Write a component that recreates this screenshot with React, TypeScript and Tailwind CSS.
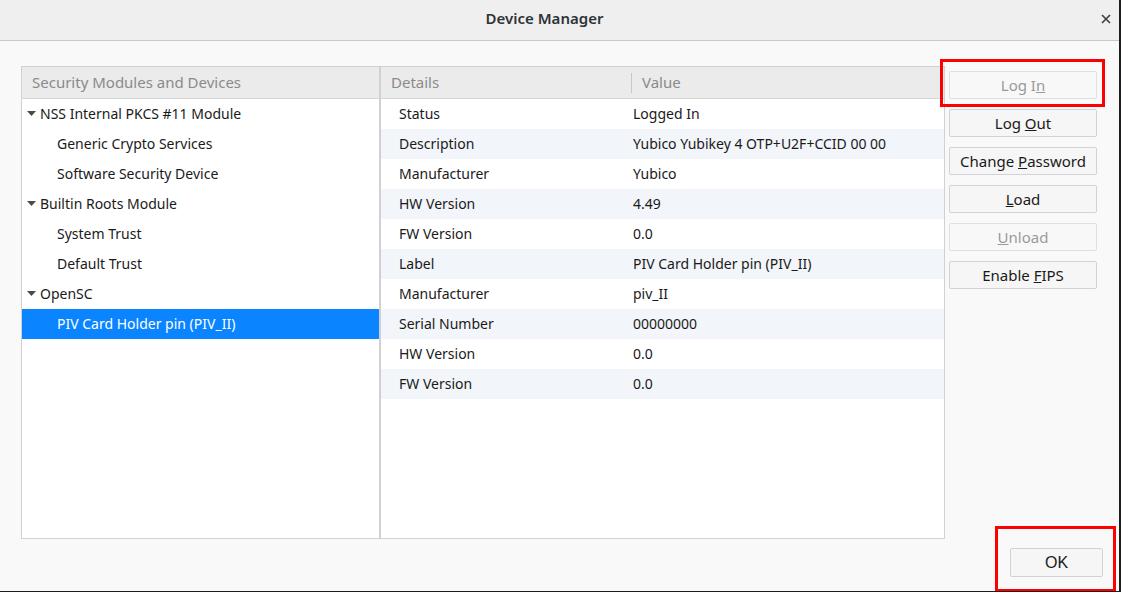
import React from "react";

const F = { fontFamily: '"Noto Sans", "Open Sans", sans-serif' };

function Caret() {
  return (
    <svg width="9" height="5" viewBox="0 0 9 5" className="mr-[4px] shrink-0">
      <path d="M0 0 L9 0 L4.5 5 Z" fill="#4a4a4a" />
    </svg>
  );
}

const tree: { label: string; level: number; selected?: boolean }[] = [
  { label: "NSS Internal PKCS #11 Module", level: 0 },
  { label: "Generic Crypto Services", level: 1 },
  { label: "Software Security Device", level: 1 },
  { label: "Builtin Roots Module", level: 0 },
  { label: "System Trust", level: 1 },
  { label: "Default Trust", level: 1 },
  { label: "OpenSC", level: 0 },
  { label: "PIV Card Holder pin (PIV_II)", level: 1, selected: true },
];

const details: [string, string][] = [
  ["Status", "Logged In"],
  ["Description", "Yubico Yubikey 4 OTP+U2F+CCID 00 00"],
  ["Manufacturer", "Yubico"],
  ["HW Version", "4.49"],
  ["FW Version", "0.0"],
  ["Label", "PIV Card Holder pin (PIV_II)"],
  ["Manufacturer", "piv_II"],
  ["Serial Number", "00000000"],
  ["HW Version", "0.0"],
  ["FW Version", "0.0"],
];

function Btn({ children, disabled }: { children: React.ReactNode; disabled?: boolean }) {
  return (
    <div
      className={
        "h-[28px] w-[148px] flex items-center justify-center rounded-[2px] border text-[15px] " +
        (disabled ? "text-[#9a9a9a] border-[#e0e0e4] bg-[#f8f8f8]" : "text-[#1a1a1a] border-[#d2d2d6] bg-[#f6f6f6]")
      }
    >
      <span>{children}</span>
    </div>
  );
}

export default function App() {
  return (
    <div
      className="relative w-[1121px] h-[592px] bg-[#f9f9f9] flex flex-col border-r-2 border-b border-[#1c1c1c] overflow-hidden"
      style={F}
    >
      <div className="relative h-[41px] shrink-0 bg-[#efefef] border-b border-[#c8c8c8] flex items-center justify-center pr-[30px] pb-[3px]">
        <span className="text-[15px] font-semibold text-[#2e3436]">Device Manager</span>
        <svg className="absolute right-[8px] top-[14px]" width="10" height="10" viewBox="0 0 10 10">
          <path d="M1 1 L9 9 M9 1 L1 9" stroke="#3a3f44" strokeWidth="1.6" />
        </svg>
      </div>

      <div className="flex pl-[21px] pt-[25px]">
        {/* left tree */}
        <div className="w-[359px] h-[473px] border border-[#d0d0d6] bg-white flex flex-col">
          <div className="h-[32px] bg-[#ebebeb] border-b border-[#d6d6d6] flex items-center pl-[10px] text-[15px] text-[#8a8a8a]">
            Security Modules and Devices
          </div>
          {tree.map((t, i) => (
            <div
              key={i}
              className={
                "h-[30px] flex items-center text-[14px] pb-[1px] " +
                (t.selected ? "bg-[#0a84ff] text-white " : "text-[#1a1a1a] ") +
                (t.level === 0 ? "pl-[5px]" : "pl-[35px]")
              }
            >
              {t.level === 0 && <Caret />}
              {t.label}
            </div>
          ))}
        </div>

        {/* details */}
        <div className="w-[565px] h-[473px] border border-[#d0d0d6] bg-white flex flex-col">
          <div className="h-[32px] bg-[#ebebeb] border-b border-[#d6d6d6] flex items-center text-[15px] text-[#8a8a8a]">
            <div className="w-[250px] pl-[10px]">Details</div>
            <div className="h-[20px] border-l border-[#c8c8c8] pl-[10px] flex items-center">Value</div>
          </div>
          {details.map(([k, v], i) => (
            <div
              key={i}
              className={
                "h-[30px] flex items-center text-[14px] pb-[1px] text-[#1a1a1a] " +
                (i % 2 === 1 ? "bg-[#f2f5f9]" : "bg-white")
              }
            >
              <div className="w-[252px] pl-[18px]">{k}</div>
              <div>{v}</div>
            </div>
          ))}
        </div>

        {/* buttons */}
        <div className="ml-[4px] pt-[5px] flex flex-col gap-[10px]">
          <Btn disabled>
            Log I<u>n</u>
          </Btn>
          <Btn>
            Log <u>O</u>ut
          </Btn>
          <Btn>
            Change <u>P</u>assword
          </Btn>
          <Btn>
            <u>L</u>oad
          </Btn>
          <Btn disabled>
            <u>U</u>nload
          </Btn>
          <Btn>
            Enable <u>F</u>IPS
          </Btn>
        </div>
      </div>

      <div className="flex justify-end pr-[16px] pt-[9px]">
        <div
          className="w-[93px] h-[29px] flex items-center justify-center rounded-[2px] border border-[#d2d2d6] bg-[#f6f6f6] text-[16px] text-[#1a1a1a]"
          style={{ fontFamily: '"Liberation Sans", Arial, sans-serif' }}
        >
          OK
        </div>
      </div>

      {/* annotation boxes */}
      <div className="absolute left-[940px] top-[59px] w-[165px] h-[48px] border-[3px] border-[#ff0000]" />
      <div className="absolute left-[995px] top-[526px] w-[121px] h-[66px] border-[3px] border-[#ff0000]" />
    </div>
  );
}
